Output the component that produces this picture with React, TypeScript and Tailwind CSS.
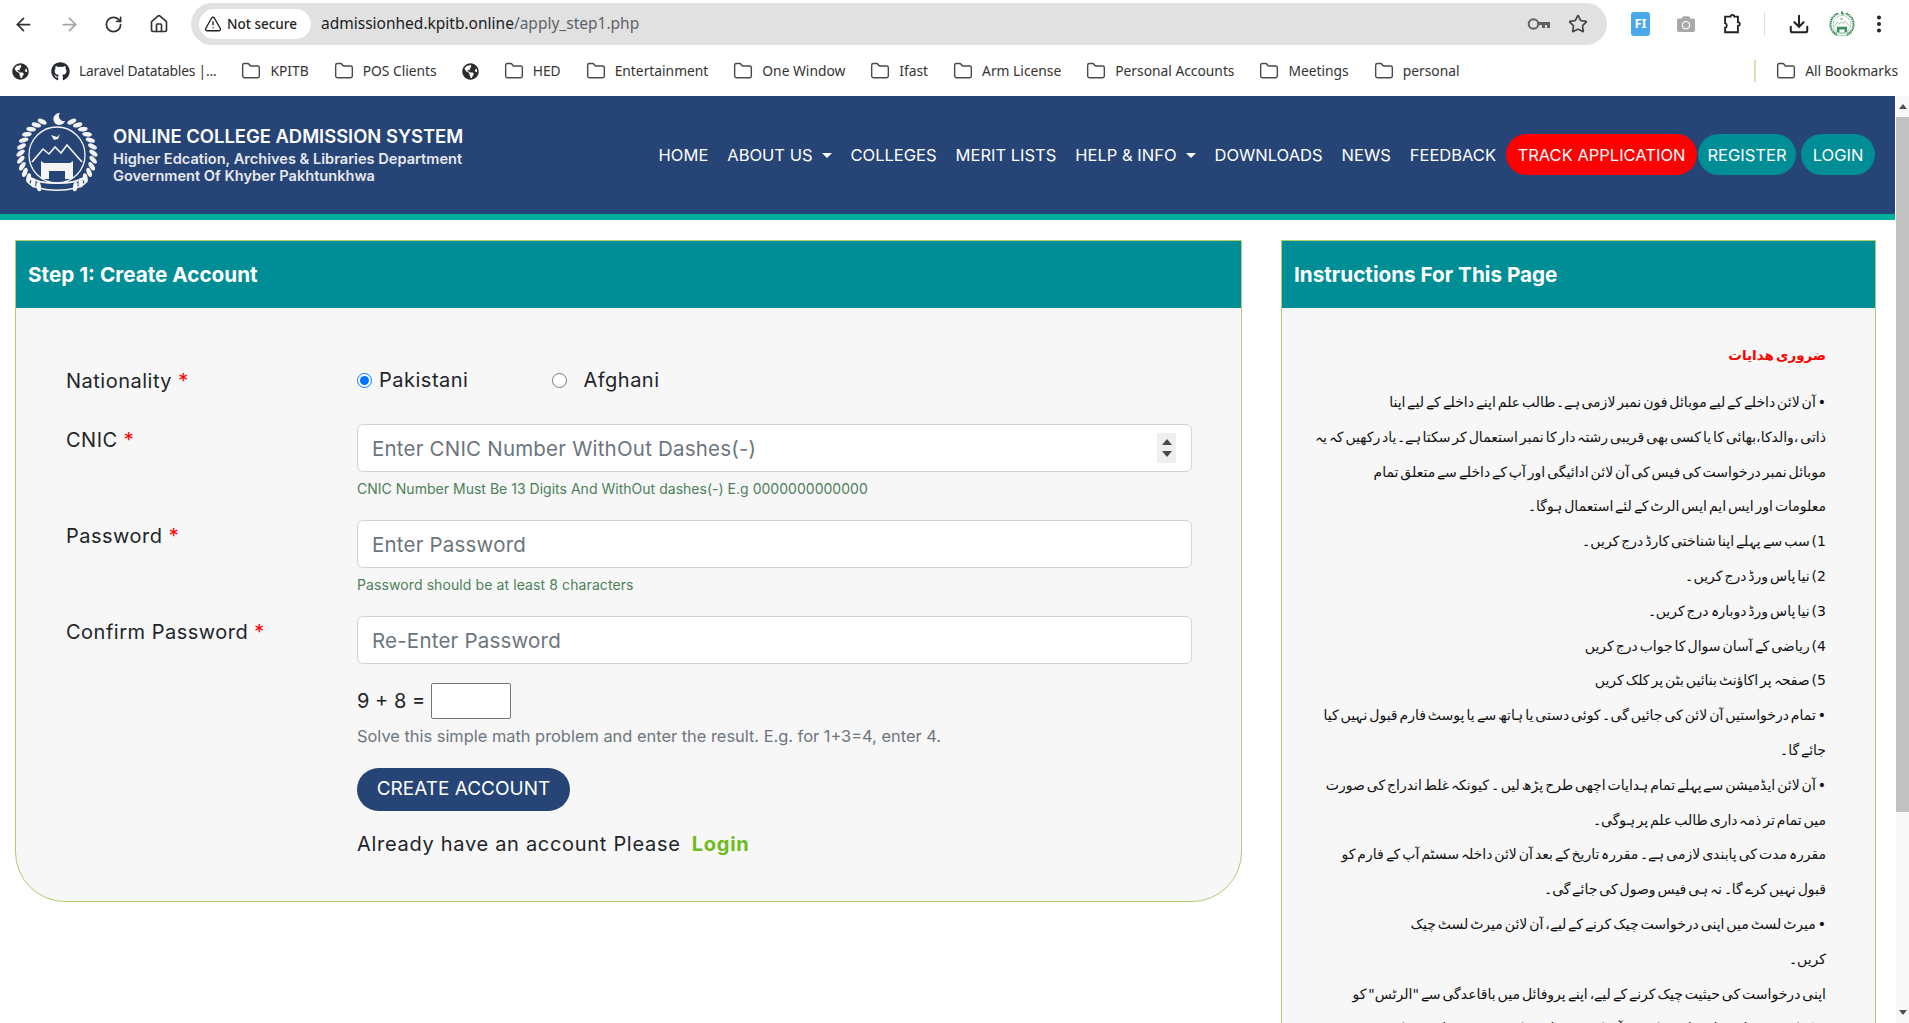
import { ArrowLeft, ArrowRight, RotateCw, Home, TriangleAlert, Star, Folder, Download, EllipsisVertical } from "lucide-react"
import { FaGithub, FaGlobeAmericas, FaCamera } from "react-icons/fa"

const bookmarks = [
  { type: "github", label: "Laravel Datatables |..." },
  { type: "folder", label: "KPITB" },
  { type: "folder", label: "POS Clients" },
  { type: "globe", label: "" },
  { type: "folder", label: "HED" },
  { type: "folder", label: "Entertainment" },
  { type: "folder", label: "One Window" },
  { type: "folder", label: "Ifast" },
  { type: "folder", label: "Arm License" },
  { type: "folder", label: "Personal Accounts" },
  { type: "folder", label: "Meetings" },
  { type: "folder", label: "personal" },
]

const navItems = [
  { label: "HOME" },
  { label: "ABOUT US", caret: true },
  { label: "COLLEGES" },
  { label: "MERIT LISTS" },
  { label: "HELP & INFO", caret: true },
  { label: "DOWNLOADS" },
  { label: "NEWS" },
  { label: "FEEDBACK" },
]

const urduLines = [
  "• آن لائن داخلے کے لیے موبائل فون نمبر لازمی ہے۔طالب علم اپنے داخلے کے لیے اپنا",
  "ذاتی ،والدکا،بھائی کا یا کسی بھی قریبی رشتہ دار کا نمبر استعمال کر سکتا ہے۔یاد رکھیں کہ یہ",
  "موبائل نمبر درخواست کی فیس کی آن لائن ادائیگی اور آپ کے داخلے سے متعلق تمام",
  "معلومات اور ایس ایم ایس الرٹ کے لئے استعمال ہوگا۔",
  "1) سب سے پہلے اپنا شناختی کارڈ درج کریں۔",
  "2) نیا پاس ورڈ درج کریں۔",
  "3) نیا پاس ورڈ دوبارہ درج کریں۔",
  "4) ریاضی کے آسان سوال کا جواب درج کریں",
  "5) صفحہ پر اکاؤنٹ بنائیں بٹن پر کلک کریں",
  "• تمام درخواستیں آن لائن کی جائیں گی۔ کوئی دستی یا ہاتھ سے یا پوسٹ فارم قبول نہیں کیا",
  "جائے گا۔",
  "• آن لائن ایڈمیشن سے پہلے تمام ہدایات اچھی طرح پڑھ لیں ۔ کیونکہ غلط اندراج کی صورت",
  "میں تمام تر ذمہ داری طالب علم پر ہوگی۔",
  "مقررہ مدت کی پابندی لازمی ہے۔ مقررہ تاریخ کے بعد آن لائن داخلہ سسٹم آپ کے فارم کو",
  "قبول نہیں کرے گا۔ نہ ہی فیس وصول کی جائے گی۔",
  "• میرٹ لسٹ میں اپنی درخواست چیک کرنے کے لیے، آن لائن میرٹ لسٹ چیک",
  "کریں۔",
  "اپنی درخواست کی حیثیت چیک کرنے کے لیے، اپنے پروفائل میں باقاعدگی سے \"الرٹس\" کو",
  "چیک کریں۔ پہلی شارٹ لسٹ کے بعد آپ کی درخواست کی حیثیت تبدیل ہو سکتی ہے",
]

function Emblem({ className, color }: { className: string; color: string }) {
  const leaves = Array.from({ length: 13 }, (_, i) => 24 + i * 10.5)
  return (
    <svg viewBox="0 0 82 84" className={className}>
      <path d="M44 1a6 6 0 1 0 5 8 5 5 0 0 1-5-8z" fill={color} />
      {leaves.map((deg) => (
        <g key={deg}>
          <ellipse cx="41" cy="6.5" rx="2.3" ry="4.8" fill={color} transform={`rotate(${deg} 41 43) rotate(40 41 6.5)`} />
          <ellipse cx="41" cy="6.5" rx="2.3" ry="4.8" fill={color} transform={`rotate(${-deg} 41 43) rotate(-40 41 6.5)`} />
        </g>
      ))}
      <circle cx="41" cy="43" r="28" fill="none" stroke={color} strokeWidth="1.3" />
      <path d="M16 50l11-13 6 5 6-7 6 6 6-8 15 17" fill="none" stroke={color} strokeWidth="1.6" />
      <path d="M35 23l6 2 3-3-2 5-4 1z" fill={color} />
      <path d="M25 67V49l3 2h26l3-2v18H49v-8H33v8z" fill={color} />
      <path d="M12 70c8 11 50 11 58 0l-3-4c-9 7-43 7-52 0z" fill="none" stroke={color} strokeWidth="1.6" />
    </svg>
  )
}

function BookmarkIcon({ type }: { type: string }) {
  if (type === "github") return <FaGithub className="w-[19px] h-[19px] text-[#24292f]" />
  if (type === "globe") return <FaGlobeAmericas className="w-[17px] h-[17px] text-[#2b2b2b]" />
  return <Folder className="w-[20px] h-[20px] text-[#4a4a4a]" strokeWidth={1.7} />
}

function BrowserChrome() {
  return (
    <div className="h-[96px] shrink-0 bg-white font-['Noto_Sans',sans-serif] text-[#2f2f2f]">
      <div className="h-[48px] flex items-center pl-[13px] pr-[10px]">
        <ArrowLeft className="w-[21px] h-[21px] text-[#333]" strokeWidth={2} />
        <ArrowRight className="w-[21px] h-[21px] ml-[25px] text-[#a3a3a3]" strokeWidth={2} />
        <RotateCw className="w-[19px] h-[19px] ml-[24px] text-[#333]" strokeWidth={2.2} />
        <Home className="w-[20px] h-[20px] ml-[26px] text-[#333]" strokeWidth={2} />
        <div className="ml-[22px] w-[1416px] h-[42px] rounded-full bg-[#e1e1e1] flex items-center pl-[8px] pr-[19px]">
          <div className="h-[30px] w-[112px] rounded-full bg-white flex items-center pl-[5px] gap-[5px] text-[13.5px] font-medium text-[#1f1f1f]">
            <TriangleAlert className="w-[18px] h-[18px]" strokeWidth={1.8} />
            <span>Not secure</span>
          </div>
          <div className="ml-[10px] text-[15.5px] text-[#202124]">
            admissionhed.kpitb.online<span className="text-[#5f6368]">/apply_step1.php</span>
          </div>
          <svg viewBox="0 0 24 16" className="ml-auto w-[24px] h-[16px] text-[#5f5f5f]">
            <circle cx="6.5" cy="8" r="4.8" fill="none" stroke="currentColor" strokeWidth="2" />
            <path d="M11 6h12v6h-3v-3h-2v3h-3V9h-4z" fill="currentColor" />
          </svg>
          <Star className="ml-[17px] w-[20px] h-[20px] text-[#444]" strokeWidth={2} />
        </div>
        <div className="ml-[24px] w-[19px] h-[24px] rounded-[3px] bg-[#4aa8ec] text-white text-[13px] font-bold flex items-center justify-center">FI</div>
        <FaCamera className="ml-[27px] w-[18px] h-[18px] text-[#a9a9a9]" />
        <svg viewBox="0 0 20 24" className="ml-[27px] w-[19px] h-[22px] text-[#222]">
          <path d="M6 4h3a2 2 0 0 1 4 0h4v6a2 2 0 0 1 0 4v7H3v-5a2.6 2.6 0 0 0 0-5V4z" fill="none" stroke="currentColor" strokeWidth="2" />
        </svg>
        <div className="ml-[23px] w-px h-[24px] bg-[#d6e6c4]" />
        <Download className="ml-[23px] w-[22px] h-[22px] text-[#222]" strokeWidth={2.2} />
        <Emblem className="ml-[19px] w-[26px] h-[30px]" color="#3f8f5f" />
        <EllipsisVertical className="ml-[13px] w-[22px] h-[22px] text-[#222]" strokeWidth={2.4} />
      </div>
      <div className="h-[48px] flex items-center pl-[12px] pr-[11px] pb-[2px] text-[13.8px] text-[#333]">
        <FaGlobeAmericas className="w-[17px] h-[17px] text-[#2b2b2b] mr-[22px]" />
        <div className="flex items-center gap-[25px]">
          {bookmarks.map((b, i) => (
            <div key={i} className="flex items-center gap-[9px]">
              <BookmarkIcon type={b.type} />
              {b.label && <span className={i === 0 ? "tracking-[-0.2px]" : ""}>{b.label}</span>}
            </div>
          ))}
        </div>
        <div className="ml-auto w-[2px] h-[22px] bg-[#cfe5b8]" />
        <div className="ml-[20px] flex items-center gap-[9px]">
          <Folder className="w-[20px] h-[20px] text-[#4a4a4a]" strokeWidth={1.7} />
          <span>All Bookmarks</span>
        </div>
      </div>
    </div>
  )
}

function SiteHeader() {
  return (
    <header className="h-[124px] shrink-0 bg-[#264476] border-b-[6px] border-[#04b09a] flex items-start pl-[16px] pr-[20px] text-white">
      <Emblem className="w-[82px] h-[84px] mt-[16px]" color="#f4f4f4" />
      <div className="ml-[15px] mt-[29px]">
        <div className="text-[18.4px] leading-[22px] font-semibold whitespace-nowrap">ONLINE COLLEGE ADMISSION SYSTEM</div>
        <div className="mt-[4px] text-[14.6px] leading-[17px] font-semibold text-[#e6e8ee] whitespace-nowrap">
          Higher Edcation, Archives &amp; Libraries Department
          <br />
          Government Of Khyber Pakhtunkhwa
        </div>
      </div>
      <nav className="ml-auto mt-[38px] flex items-center text-[16.5px] whitespace-nowrap">
        <div className="flex items-center gap-[19px] mr-[10px] pt-[1px]">
          {navItems.map((n) => (
            <span key={n.label} className="flex items-center">
              {n.label}
              {n.caret && <span className="ml-[9px] border-x-[5px] border-x-transparent border-t-[5px] border-t-white" />}
            </span>
          ))}
        </div>
        <span className="h-[41px] w-[191px] pt-[2px] rounded-full bg-[#ff0000] flex items-center justify-center">TRACK APPLICATION</span>
        <span className="ml-[1px] h-[41px] w-[98px] pt-[2px] rounded-full bg-[#008e96] flex items-center justify-center">REGISTER</span>
        <span className="ml-[5px] h-[41px] w-[74px] pt-[2px] rounded-full bg-[#008e96] flex items-center justify-center">LOGIN</span>
      </nav>
    </header>
  )
}

function Required({ label }: { label: string }) {
  return (
    <span>
      {label} <span className="text-[#ff0000]">*</span>
    </span>
  )
}

const inputClass =
  "w-full h-[48px] rounded-[6px] border border-[#ced4da] bg-white px-[14px] text-[20.5px] tracking-[0.2px] outline-none placeholder:text-[#6c757d]"

function AccountCard() {
  return (
    <section className="border border-[#abcf6c] bg-[#f7f7f7] rounded-b-[50px]">
      <h2 className="h-[67px] bg-[#008e96] flex items-center pl-[12px] text-[20.7px] font-bold text-white">Step 1: Create Account</h2>
      <div className="grid grid-cols-[291px_835px] pl-[50px] pt-[56px] pb-[41px] text-[20px] tracking-[0.5px] text-[#212529]">
        <div className="h-[60px] leading-[34px]"><Required label="Nationality" /></div>
        <div className="h-[60px] flex items-start">
          <label className="flex items-center h-[32px]">
            <input type="radio" name="nationality" defaultChecked className="w-[15px] h-[15px]" />
            <span className="ml-[7px]">Pakistani</span>
          </label>
          <label className="flex items-center h-[32px] ml-[84px]">
            <input type="radio" name="nationality" className="w-[15px] h-[15px]" />
            <span className="ml-[16px]">Afghani</span>
          </label>
        </div>

        <div className="leading-[32px]"><Required label="CNIC" /></div>
        <div className="h-[96px]">
          <div className="relative">
            <input className={inputClass} placeholder="Enter CNIC Number WithOut Dashes(-)" />
            <span className="absolute right-[16px] top-[9px] w-[19px] h-[30px] bg-[#efefef] flex flex-col items-center justify-center gap-[6px]">
              <span className="border-x-[5px] border-x-transparent border-b-[6px] border-b-[#4a4a4a]" />
              <span className="border-x-[5px] border-x-transparent border-t-[6px] border-t-[#4a4a4a]" />
            </span>
          </div>
          <p className="mt-[5px] text-[14px] tracking-[0.02px] leading-[24px] text-[#4c8059]">CNIC Number Must Be 13 Digits And WithOut dashes(-) E.g 0000000000000</p>
        </div>

        <div className="leading-[32px]"><Required label="Password" /></div>
        <div className="h-[96px]">
          <input className={inputClass} placeholder="Enter Password" />
          <p className="mt-[5px] text-[14px] tracking-[0.1px] leading-[24px] text-[#4c8059]">Password should be at least 8 characters</p>
        </div>

        <div className="leading-[32px]"><Required label="Confirm Password" /></div>
        <div>
          <input className={inputClass} placeholder="Re-Enter Password" />
          <div className="mt-[19px] flex items-center h-[36px]">
            <span className="w-[74px] whitespace-nowrap tracking-[0px]">9 + 8 =</span>
            <input className="w-[80px] h-[36px] bg-white border border-[#767676] rounded-[2px]" />
          </div>
          <p className="mt-[5px] text-[16.4px] tracking-[0px] leading-[24px] text-[#6c757d]">Solve this simple math problem and enter the result. E.g. for 1+3=4, enter 4.</p>
          <button className="mt-[20px] h-[43px] w-[213px] rounded-full bg-[#264476] text-white text-[19px] tracking-[0px]">CREATE ACCOUNT</button>
          <p className="mt-[17px] leading-[32px] tracking-[0.7px]">
            Already have an account Please <a className="ml-[5px] font-bold text-[#6fbb24]">Login</a>
          </p>
        </div>
      </div>
    </section>
  )
}

function InstructionsCard() {
  return (
    <section className="border-x border-t border-[#abcf6c] bg-[#f7f7f7]">
      <h2 className="h-[67px] bg-[#008e96] flex items-center pl-[12px] text-[20.7px] font-bold text-white">Instructions For This Page</h2>
      <div dir="rtl" className="pt-[32px] pr-[49px] font-['DejaVu_Sans',sans-serif] text-[14px] [word-spacing:-2.5px] leading-[34.8px] text-[#111111] whitespace-nowrap">
        <h3 className="text-[13.5px] font-bold leading-[30px] text-[#ff0000] mb-[15px]">ضروری ھدایات</h3>
        {urduLines.map((line, i) => (
          <p key={i}>{line}</p>
        ))}
      </div>
    </section>
  )
}

function PageScrollbar() {
  return (
    <div className="w-[13px] shrink-0 ml-[1px] bg-[#f8f8f8] flex flex-col items-center">
      <div className="h-[21px] flex items-center">
        <span className="border-x-[4px] border-x-transparent border-b-[5px] border-b-[#505050]" />
      </div>
      <div className="w-full h-[695px] bg-[#c1c1c1]" />
      <div className="mt-auto h-[21px] flex items-center">
        <span className="border-x-[4px] border-x-transparent border-t-[5px] border-t-[#505050]" />
      </div>
    </div>
  )
}

export default function App() {
  return (
    <div className="h-[1023px] w-[1909px] overflow-hidden flex flex-col bg-white">
      <BrowserChrome />
      <div className="flex-1 min-h-0 flex">
        <div className="flex-1 min-w-0 flex flex-col font-['Inter',sans-serif]">
          <SiteHeader />
          <main className="flex-1 min-h-0 overflow-hidden pt-[20px] pl-[15px] grid grid-cols-[1227px_595px] gap-x-[39px] items-start">
            <AccountCard />
            <InstructionsCard />
          </main>
        </div>
        <PageScrollbar />
      </div>
    </div>
  )
}
